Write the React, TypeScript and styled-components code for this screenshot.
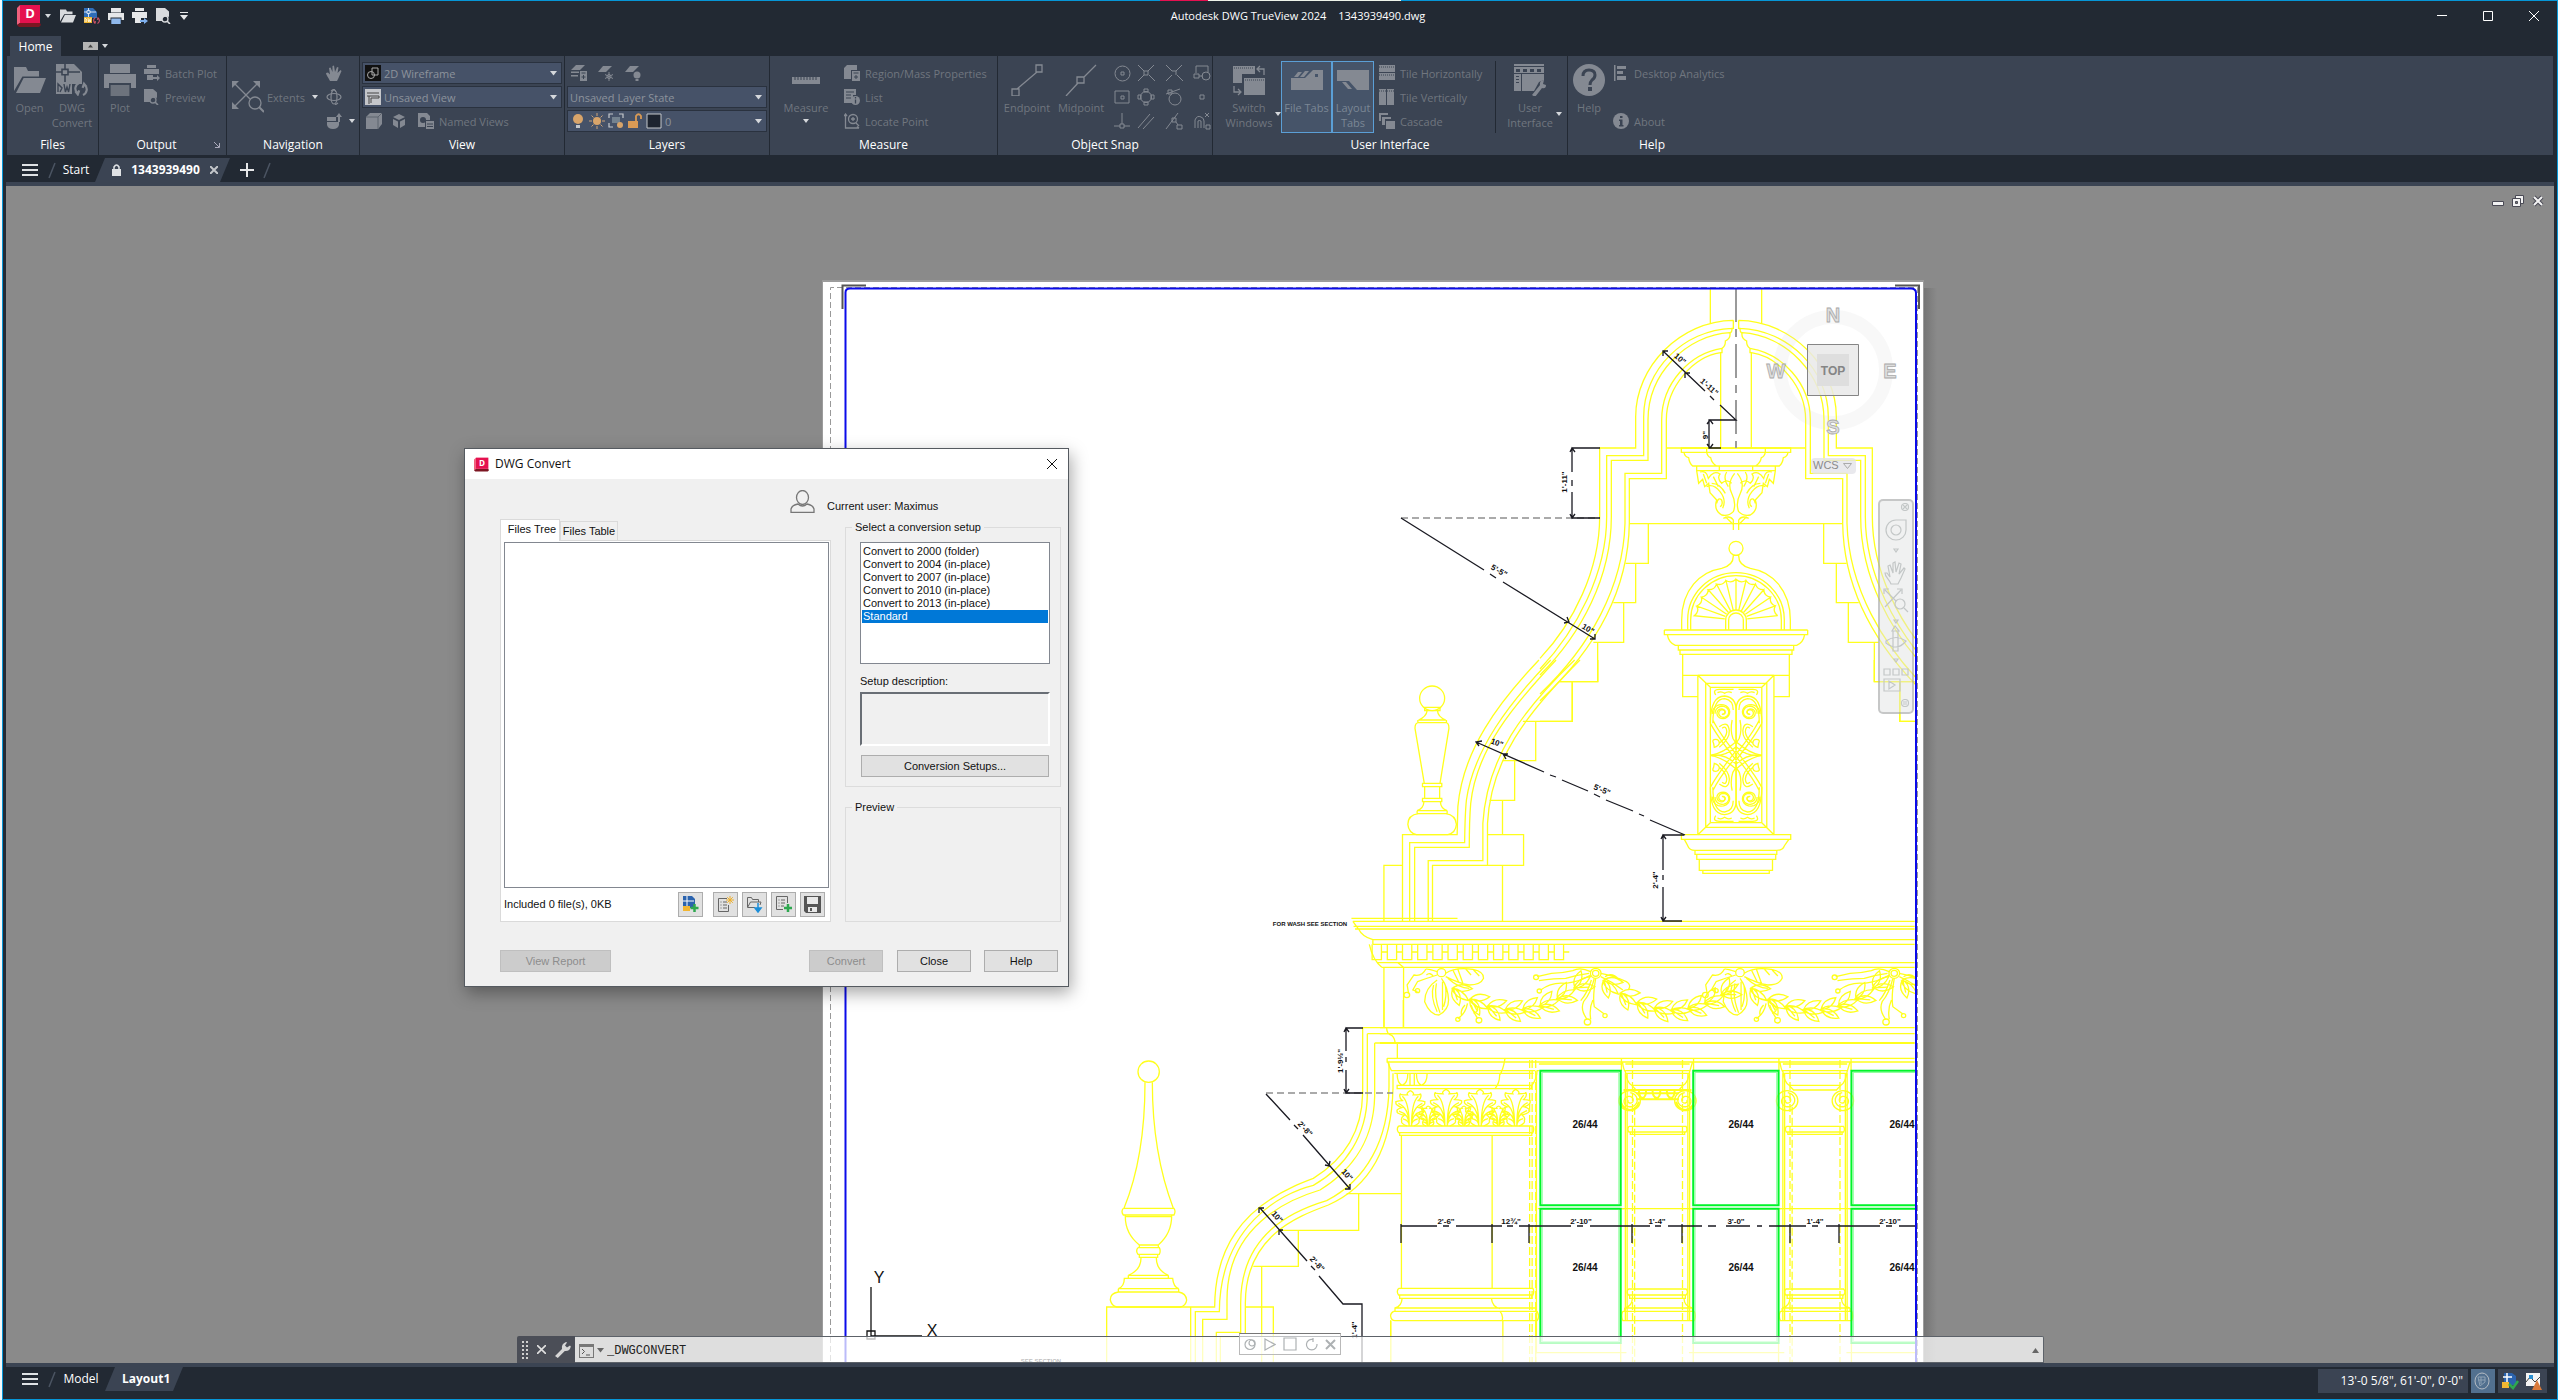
import React from 'react';
import styled, { createGlobalStyle, css } from 'styled-components';

const UI = `'Open Sans', 'Noto Sans', sans-serif`;
const DLG = `'Liberation Sans', Arial, sans-serif`;
const C = {
  dark: '#222933',
  panel: '#3b4453',
  blue: '#0696d7',
  dim: '#70767f',
  icon: '#848992',
  grey: '#8a8a8a',
  yellow: '#ffff1c',
};

const Global = createGlobalStyle`
  *, *::before, *::after { box-sizing: border-box; }
  body { margin: 0; background: #f4f9fc; font-family: ${UI}; font-size: 12px; overflow: hidden; }
  button, select, input, textarea { font: inherit; color: inherit; margin: 0; padding: 0; border: 0; background: none; border-radius: 0; }
  svg { display: block; flex: none; }
`;

const Shell = styled.div`
  height: 100vh;
  margin: 0 2px;
  display: flex;
  flex-direction: column;
  background: ${C.dark};
  border: 1px solid ${C.blue};
  border-top: 0;
  color: #fff;
`;
const Accent = styled.div`
  height: 1px;
  flex: none;
  background: linear-gradient(90deg, ${C.blue} 1157px, #e51050 1157px 1205px, #eef3ea 1205px 1398px, ${C.blue} 1398px);
`;

/* ---------- title bar ---------- */
const TitleBar = styled.header`
  height: 30px;
  flex: none;
  display: grid;
  grid-template-columns: 1fr auto 1fr;
  align-items: center;
  padding: 0 18px 0 14px;
  line-height: 16px;
`;
const QuickTools = styled.div`
  display: flex;
  align-items: center;
  gap: 8px;
`;
const AppMenu = styled.button`
  display: flex;
  align-items: center;
  gap: 4px;
  margin-right: 1px;
`;
const PlainButton = styled.button`
  display: flex;
  align-items: center;
  justify-content: center;
`;
const Caption = styled.div`
  display: flex;
  gap: 12px;
  padding-left: 40px;
  font-size: 11px;
  white-space: nowrap;
`;
const WindowButtons = styled.div`
  display: flex;
  justify-content: flex-end;
  gap: 36px;
`;

/* ---------- ribbon ---------- */
const TabRow = styled.div`
  height: 25px;
  flex: none;
  display: flex;
  align-items: flex-end;
  padding-left: 7px;
`;
const RibbonTab = styled.button`
  width: 51px;
  height: 20px;
  background: ${C.panel};
`;
const RibbonToggle = styled.button`
  display: flex;
  align-items: center;
  gap: 4px;
  height: 20px;
  margin-left: 22px;
`;
const Ribbon = styled.div`
  height: 99px;
  flex: none;
  margin: 0 4px;
  background: ${C.panel};
  display: flex;
`;
const Panel = styled.section<{ $w: number; $last?: boolean }>`
  width: ${(p) => p.$w}px;
  flex: none;
  display: flex;
  flex-direction: column;
  border-right: ${(p) => (p.$last ? '0' : `1px solid ${C.dark}`)};
`;
const PanelBody = styled.div<{ $pad?: number }>`
  height: 78px;
  padding: 5px 0 0 ${(p) => p.$pad ?? 3}px;
  display: flex;
  color: ${C.dim};
  font-size: 11px;
`;
const PanelTitle = styled.div`
  display: flex;
  align-items: center;
  line-height: 21px;
  h2 { margin: 0; flex: 1; font-size: 12px; font-weight: 400; text-align: center; }
  button { margin-right: 6px; }
`;
const BigButton = styled.button<{ $w: number; $on?: boolean }>`
  width: ${(p) => p.$w}px;
  height: 72px;
  flex: none;
  display: flex;
  flex-direction: column;
  align-items: center;
  gap: 4px;
  padding-top: 3px;
  line-height: 15px;
  white-space: nowrap;
  ${(p) => p.$on && css`background: #465469; outline: 1px solid #5b9fd6; outline-offset: -1px; color: #7b8795;`}
`;
const SplitButton = styled.div`
  display: flex;
  align-items: center;
  padding-left: 4px;
  height: 72px;
`;
const CaretCell = styled.span`
  padding-top: 34px;
`;
const ExtentsButton = styled.button`
  height: 72px;
  width: 80px;
  display: flex;
  align-items: center;
  gap: 3px;
`;
const SplitCaret = styled.span`
  display: flex;
  align-items: center;
  height: 72px;
`;
const Column = styled.div<{ $ml?: number }>`
  display: flex;
  flex-direction: column;
  margin-left: ${(p) => p.$ml ?? 4}px;
`;
const RowButton = styled.button`
  height: 24px;
  display: flex;
  align-items: center;
  gap: 5px;
  padding: 0 2px;
  white-space: nowrap;
`;
const IconRow = styled.div<{ $gap: number }>`
  height: 24px;
  display: flex;
  align-items: center;
  gap: ${(p) => p.$gap}px;
  padding-left: 4px;
`;
const Combo = styled.label`
  width: 200px;
  height: 22px;
  margin: 1px 0;
  display: flex;
  align-items: center;
  gap: 3px;
  padding: 0 4px 0 2px;
  background: #465268;
  border: 1px solid #2a323f;
  color: #8d939c;
  select { flex: 1; appearance: none; outline: 0; min-width: 0; }
`;
const SnapGrid = styled.div`
  display: grid;
  grid-template-columns: 24px 24px 32px 24px;
  grid-auto-rows: 24px;
  place-items: center;
`;
const Divider = styled.div`
  width: 1px;
  height: 72px;
  margin: 0 4px 0 8px;
  background: ${C.dark};
`;
const TileColumn = styled(Column)`
  width: 110px;
`;

/* ---------- tab strips ---------- */
const Strip = styled.nav<{ $h: number; $top: number }>`
  height: ${(p) => p.$h}px;
  flex: none;
  display: flex;
  align-items: flex-start;
  padding: ${(p) => p.$top}px 10px 0 19px;
  line-height: 24px;
`;
const StripButton = styled.button<{ $w: number; $ml: number }>`
  width: ${(p) => p.$w}px;
  height: 24px;
  margin-left: ${(p) => p.$ml}px;
  display: flex;
  align-items: center;
  justify-content: center;
  white-space: nowrap;
`;
const ActiveTab = styled.div<{ $w: number }>`
  width: ${(p) => p.$w}px;
  height: 24px;
  margin-left: 7px;
  padding: 0 12px 0 17px;
  display: flex;
  align-items: center;
  justify-content: space-between;
  font-weight: 700;
  background: ${C.panel};
  clip-path: polygon(10px 0, 100% 0, calc(100% - 10px) 100%, 0 100%);
`;
const Band = styled.div`
  height: 4px;
  flex: none;
  margin: 0 3px;
  background: ${C.panel};
`;
const StatusBox = styled.div<{ $w: number; $on?: boolean }>`
  width: ${(p) => p.$w}px;
  height: 24px;
  margin: 2px 0 0 3px;
  padding: 0 5px;
  display: flex;
  align-items: center;
  justify-content: flex-end;
  gap: 6px;
  background: ${(p) => (p.$on ? '#52708f' : C.panel)};
  white-space: nowrap;
`;
const Spacer = styled.div`
  flex: 1;
`;

/* ---------- canvas ---------- */
const Canvas = styled.main`
  flex: 1;
  min-height: 0;
  position: relative;
  overflow: hidden;
  margin: 0 3px;
  background: ${C.grey};
`;
const Sheet = styled.svg`
  position: absolute;
  left: 0;
  top: 0;
  path, circle, ellipse, rect, line { vector-effect: non-scaling-stroke; }
`;
const DocButtons = styled.div`
  position: absolute;
  right: 10px;
  top: 9px;
  display: flex;
  gap: 8px;
`;
const NavBar = styled.div`
  position: absolute;
  left: 1872px;
  top: 313px;
  width: 36px;
  height: 215px;
  display: flex;
  flex-direction: column;
  align-items: center;
  border: 2px solid rgba(120, 120, 120, 0.35);
  border-radius: 5px;
  background: rgba(225, 228, 228, 0.5);
`;
const NavItem = styled.button<{ $h: number }>`
  height: ${(p) => p.$h}px;
  width: 28px;
  flex: none;
  display: flex;
  align-items: center;
  justify-content: center;
`;
const CommandBar = styled.div`
  position: absolute;
  left: 511px;
  top: 1150px;
  width: 1527px;
  height: 27px;
  display: flex;
  color: #222;
`;
const CommandGrip = styled.div`
  width: 58px;
  display: flex;
  align-items: center;
  justify-content: space-between;
  padding: 0 4px 0 5px;
  background: #4b4e57;
  border-radius: 2px 0 0 0;
`;
const CommandField = styled.div`
  flex: 1;
  display: flex;
  align-items: center;
  gap: 3px;
  padding: 2px 4px 0 4px;
  background: rgba(255, 255, 255, 0.72);
  border: 1px solid #5d6269;
  border-left: 0;
  border-radius: 0 2px 0 0;
  input { flex: 1; font: 12px/16px 'Liberation Mono', monospace; outline: 0; }
`;
const MotionBar = styled.div`
  position: absolute;
  left: 1233px;
  top: 1147px;
  width: 102px;
  height: 22px;
  display: flex;
  align-items: center;
  justify-content: space-around;
  background: rgba(255, 255, 255, 0.6);
  border: 1px solid #b9b9b9;
  border-top-color: #777;
`;

/* ---------- dialog ---------- */
const Dialog = styled.div`
  position: absolute;
  left: 458px;
  top: 262px;
  width: 605px;
  height: 539px;
  display: flex;
  flex-direction: column;
  background: #f0f0f0;
  border: 1px solid #555a60;
  box-shadow: 2px 6px 16px rgba(0, 0, 0, 0.35);
  color: #111;
  font: 11px/13px ${DLG};
`;
const DialogTitle = styled.div`
  height: 30px;
  flex: none;
  display: flex;
  align-items: center;
  gap: 6px;
  padding: 0 11px 0 9px;
  background: #fff;
  font: 12px/16px ${UI};
  span { flex: 1; }
`;
const UserLine = styled.div`
  height: 40px;
  display: flex;
  align-items: flex-end;
  gap: 12px;
  padding: 0 0 6px 325px;
  span { line-height: 14px; }
`;
const DialogCols = styled.div`
  display: flex;
  justify-content: space-between;
  padding: 0 7px 0 35px;
`;
const FilesPane = styled.div`
  width: 331px;
`;
const TabHeads = styled.div`
  display: flex;
  align-items: flex-end;
  height: 21px;
`;
const TabHead = styled.button<{ $on?: boolean }>`
  width: ${(p) => (p.$on ? 60 : 58)}px;
  height: ${(p) => (p.$on ? 22 : 19)}px;
  margin-bottom: ${(p) => (p.$on ? -1 : 0)}px;
  padding-left: ${(p) => (p.$on ? 4 : 0)}px;
  padding-bottom: ${(p) => (p.$on ? 3 : 0)}px;
  position: relative;
  white-space: nowrap;
  background: ${(p) => (p.$on ? '#fff' : '#f0f0f0')};
  border: 1px solid #dadada;
  border-bottom: 0;
`;
const TabPage = styled.div`
  height: 382px;
  padding: 1px 1px 0 3px;
  display: flex;
  flex-direction: column;
  background: #fff;
  border: 1px solid #dadada;
`;
const Tree = styled.div`
  height: 346px;
  border: 1px solid #828790;
`;
const FilesFoot = styled.div`
  flex: 1;
  display: flex;
  align-items: center;
  gap: 4px;
  padding-right: 4px;
  span { flex: 1; }
`;
const ToolButton = styled.button<{ $first?: boolean }>`
  width: 25px;
  height: 25px;
  margin-right: ${(p) => (p.$first ? 6 : 0)}px;
  display: flex;
  align-items: center;
  justify-content: center;
  background: #e1e1e1;
  border: 1px solid #adadad;
`;
const SetupPane = styled.div`
  width: 216px;
  display: flex;
  flex-direction: column;
`;
const Group = styled.fieldset<{ $h: number; $mt: number }>`
  height: ${(p) => p.$h}px;
  margin: ${(p) => p.$mt}px 0 0;
  padding: 8px 11px 0 14px;
  min-width: 0;
  border: 1px solid #dcdcdc;
  display: flex;
  flex-direction: column;
  legend { padding: 0 3px; margin-left: -8px; }
`;
const SetupList = styled.select`
  height: 122px;
  width: 190px;
  overflow: hidden;
  background: #fff;
  border: 1px solid #828790;
  padding: 2px 1px 1px;
  outline: 0;
  option { height: 13px; min-height: 13px; line-height: 13px; padding: 0 1px; font: 11px/13px ${DLG}; color: #111; }
  option:checked { background: #0078d7 linear-gradient(#0078d7, #0078d7); color: #fff; -webkit-text-fill-color: #fff; }
`;
const FieldLabel = styled.label`
  margin: 11px 0 4px;
`;
const Description = styled.textarea`
  height: 54px;
  width: 190px;
  resize: none;
  background: #f0f0f0;
  border: 2px solid;
  border-color: #696e75 #fff #fff #696e75;
`;
const PushButton = styled.button<{ $w: number; $ml?: number; $mt?: number }>`
  width: ${(p) => p.$w}px;
  height: 22px;
  flex: none;
  margin: ${(p) => p.$mt ?? 0}px 0 0 ${(p) => p.$ml ?? 0}px;
  background: #e1e1e1;
  border: 1px solid #adadad;
  &:disabled { background: #cccccc; border-color: #bfbfbf; color: #8d8d8d; }
`;
const DialogFoot = styled.div`
  flex: 1;
  display: flex;
  align-items: flex-end;
  padding: 0 10px 14px 35px;
`;

/* ---------- icons ---------- */
const Ic = ({ s = 16, w, c = C.icon, children }: { s?: number; w?: number; c?: string; children: React.ReactNode }) => (
  <svg width={w ?? s} height={s} viewBox={`0 0 ${w ?? s} ${s}`} fill={c} stroke="none">{children}</svg>
);
const Caret = ({ c = '#d5d8dc', up = false }: { c?: string; up?: boolean }) => (
  <svg width="7" height="5" viewBox="0 0 7 5" fill={c}><path d={up ? 'M0 5h7L3.500 0z' : 'M0 0h7L3.500 4.500z'} /></svg>
);
const SmallCaret = () => <svg width="6" height="4" viewBox="0 0 6 4" fill="#d5d8dc"><path d="M0 0h6L3 4z" /></svg>;
const Slash = () => <svg width="12" height="24" viewBox="0 0 12 24"><path d="M3 20L9 5" stroke="#4b5462" strokeWidth="1.500" /></svg>;
const Menu = () => <Ic c="#dfe2e5"><path d="M0 2h16v2H0zM0 7h16v2H0zM0 12h16v2H0z" /></Ic>;
const Folder = ({ s = 16, c = C.icon }: { s?: number; c?: string }) => (
  <svg width={s} height={s} viewBox="0 0 16 16" fill={c}><path d="M0 13.500V1.500h6l1 2h5.500v2.700H4.200zM4.800 7H16l-3 7.500H1z" /></svg>
);
const Printer = ({ s = 16, c = C.icon, p = '#9a9fa7' }: { s?: number; c?: string; p?: string }) => (
  <svg width={s} height={s} viewBox="0 0 16 16"><path fill={c} d="M3 0h10v4.500H3zM0 5h16v7h-2.500V9.500h-11V12H0z" /><path fill={p} d="M3.300 10.500h9.400V16H3.300z" /></svg>
);
const DwgSheet = ({ s = 16, a = C.icon, b = C.icon, k = '#3b4453' }: { s?: number; a?: string; b?: string; k?: string }) => (
  <svg width={s} height={s} viewBox="0 0 16 16" fill="none">
    <path d="M0 0h9l4 4v6H0z" fill={a} /><path d="M4.500 0v10M0 4h12" stroke={k} strokeWidth=".8" /><path d="M3 2.700h3v2.700H3z" fill={a} stroke={k} strokeWidth=".8" />
    <path d="M0 9h8v6H0z" fill={b} /><path d="M1 14V10l2 2-1 2M4 10l.7 4 .8-2.500.8 2.500.7-4" stroke={k} strokeWidth=".7" />
    <path d="M11.500 9.500c-2 1-2.500 3.500-.8 5M13.500 15.500c2-1 2.600-3.500.8-5.200M9.600 13.500l1.300 1.700.7-2M15.300 11.500l-1.300-1.600-.7 2" stroke={a === C.icon ? C.icon : '#d4546a'} strokeWidth="1.100" />
  </svg>
);
const PageLens = ({ c = C.icon }: { c?: string }) => (
  <Ic c={c}><path d="M0 0h9l4 3.500V9a4.500 4.500 0 0 0-7 4H0z" /><circle cx="9" cy="11" r="3" fill="none" stroke={c} strokeWidth="1.300" /><path d="M11 13l3 3" stroke={c} strokeWidth="1.600" /></Ic>
);
const Snap = ({ d, extra }: { d: string; extra?: React.ReactNode }) => (
  <PlainButton aria-label="Object snap"><svg width="18" height="18" viewBox="0 0 18 18" fill="none" stroke={C.icon}><path d={d} />{extra}</svg></PlainButton>
);
const Logo = ({ w, h }: { w: number; h: number }) => (
  <svg width={w} height={h} viewBox="0 0 24 22"><path d="M0 3l3-3v18l-3 2z" fill="#f0607c" /><path d="M3 0h20v18H3z" fill="#e5114f" /><path d="M3 18h20l1 2-2 2H2l-2-2z" fill="#7c1622" /><text x="13" y="13" textAnchor="middle" fontFamily="Open Sans, sans-serif" fontWeight="700" fontSize="13" fill="#fff">D</text></svg>
);

/* ---------- drawing helpers ---------- */
const f1 = (n: number) => n.toFixed(1);
const leaf = (x: number, y: number, a: number, l: number, w: number) => {
  const tx = x + Math.cos(a) * l, ty = y + Math.sin(a) * l;
  const mx = x + Math.cos(a) * l * 0.45, my = y + Math.sin(a) * l * 0.45;
  const nx = -Math.sin(a) * w, ny = Math.cos(a) * w;
  return `M${f1(x)} ${f1(y)}Q${f1(mx + nx)} ${f1(my + ny)} ${f1(tx)} ${f1(ty)}Q${f1(mx - nx)} ${f1(my - ny)} ${f1(x)} ${f1(y)}`;
};
const swag = (x0: number, y0: number, x1: number, y1: number, sag: number) => {
  let d = '';
  const n = 8;
  for (let i = 0; i < n; i++) {
    const t = (i + 0.2) / n;
    const cx = (x0 + x1) / 2, cy = sag;
    const x = (1 - t) ** 2 * x0 + 2 * t * (1 - t) * cx + t * t * x1;
    const y = (1 - t) ** 2 * y0 + 2 * t * (1 - t) * cy + t * t * y1;
    const dx = 2 * (1 - t) * (cx - x0) + 2 * t * (x1 - cx), dy = 2 * (1 - t) * (cy - y0) + 2 * t * (y1 - cy);
    const a = Math.atan2(dy, dx);
    d += leaf(x, y, a + 0.6, 56, 22) + leaf(x, y, a - 0.6, 54, 20) + leaf(x - 4, y + 2, a, 60, 18);
    d += `M${f1(x)} ${f1(y)}l${f1(Math.cos(a + 0.6) * 40)} ${f1(Math.sin(a + 0.6) * 40)}`;
  }
  return d;
};
/* lobed leaf: an outline of rounded lobes with ribs curling out from the stem */
const acanthus = (cx: number, by: number, w: number, h: number) => {
  let d = '';
  [-1, 1].forEach((s) => {
    const pts: [number, number][] = [[0.12, 0], [0.3, 0.15], [0.22, 0.3], [0.46, 0.42], [0.3, 0.52], [0.5, 0.68], [0.28, 0.72], [0.36, 0.9], [0.1, 0.88], [0, 1]];
    d += `M${f1(cx + s * w * pts[0][0])} ${by}`;
    for (let i = 1; i < pts.length; i++) {
      const [px, py] = pts[i], [qx, qy] = pts[i - 1];
      d += `Q${f1(cx + s * w * (Math.max(px, qx) + 0.05))} ${f1(by - h * ((py + qy) / 2))} ${f1(cx + s * w * px)} ${f1(by - h * py)}`;
    }
    [[0.26, 0.2], [0.4, 0.42], [0.42, 0.64], [0.28, 0.84]].forEach(([px, py]) => {
      d += `M${f1(cx + s * w * 0.04)} ${by}Q${f1(cx + s * w * 0.04)} ${f1(by - h * py * 0.8)} ${f1(cx + s * w * px)} ${f1(by - h * py)}`;
    });
  });
  return d;
};
const spiral = (cx: number, cy: number, r: number, dir: number, start: number) => {
  let d = '';
  for (let i = 0; i <= 36; i++) {
    const t = i / 36, a = start + dir * t * Math.PI * 3.6, rr = r * (1 - t * 0.85);
    d += `${i ? 'L' : 'M'}${f1(cx + Math.cos(a) * rr)} ${f1(cy + Math.sin(a) * rr)}`;
  }
  return d;
};
const fan = () => {
  let d = '';
  const N = 12;
  for (let i = 0; i <= N; i++) {
    const a = Math.PI + ((i + 0.5) * Math.PI) / (N + 1);
    d += `M${588 + Math.cos(a) * 34} ${1050 + Math.sin(a) * 30}L${588 + Math.cos(a) * 126} ${1052 + Math.sin(a) * 124}`;
    if (i < N) {
      const b = a + Math.PI / (N + 1), m = (a + b) / 2;
      d += `Q${588 + Math.cos(m) * 112} ${1052 + Math.sin(m) * 112} ${588 + Math.cos(b) * 126} ${1052 + Math.sin(b) * 124}`;
    }
  }
  return d;
};
const Dim = ({ x, y, r = 0, s = 8, b = true, children }: { x: number; y: number; r?: number; s?: number; b?: boolean; children: string }) => (
  <text transform={`translate(${x} ${y}) rotate(${r})`} textAnchor="middle" dominantBaseline="central" fontSize={s} fontWeight={b ? 700 : 400} fill="#111" fontFamily="Liberation Sans, sans-serif">{children}</text>
);

const GABLE_HALF = 'M580 151C420 153 287 290 287 440V534H179V740C179 900 100 1060 0 1165M576 175C430 180 311 300 311 440V557H200V740C200 910 110 1080 0 1197M570 188C440 195 324 310 324 450V571H214V740C214 920 125 1090 0 1215M546 235C450 250 365 340 365 450V610H255V760C250 950 150 1130 0 1272M542 248C460 260 379 350 379 450V626H268V760C265 960 165 1140 0 1292M580 151V175H576Q577 186 570 190Q572 205 556 213Q557 228 546 235V248H542V534M511 57V160M325 761V880H257M287 880V998H220M251 998V1117H160M173 1117V1235H58M97 1235V1354H0';
const NICHE_HALF = 'M588 534H424V547H432Q434 560 446 563Q448 580 458 588H588M470 588V602H588M432 547H588M500 534V547Q503 560 512 563Q515 580 530 588M538 588V602M425 1080V1050C425 960 480 905 545 895Q581 886 580 856H588M443 1080V1050A145 142 0 0 1 588 908M452 1080V1050A136 133 0 0 1 588 917M373 1080V1094H382Q386 1118 406 1126H588M373 1080H588M373 1094H588M415 1126V1140H588M420 1140V1153H588M428 1153V1280H474M428 1216H588M557 1080V1050A31 30 0 0 1 588 1020M566 1080V1050A22 21 0 0 1 588 1029';
const BRACKET_HALF = 'M470 602L476 640L488 628L494 650L506 640L510 668L530 690Q520 720 545 735Q565 740 580 725Q590 700 575 670Q560 640 584 610M480 606Q500 600 505 625Q520 600 540 612Q530 625 545 640Q560 625 575 640M500 650Q520 640 540 665Q560 690 548 715M515 640Q540 640 556 670M530 700Q535 680 545 690Q550 705 540 710M520 620L535 650M490 612L500 640M560 606Q548 625 565 650M550 745Q570 735 580 750V780M556 740L578 762';
const SCROLL_Q = 'M925 190Q925 108 965 108Q997 112 997 150V270M932 190Q932 116 965 116Q989 120 989 150M925 190Q945 230 997 300M932 180Q950 220 1000 286M925 286Q960 280 997 245M925 286Q965 292 997 260M950 200Q975 180 978 212Q980 235 950 262M958 205Q970 195 971 215Q970 232 950 250M934 250Q928 238 940 238Q950 238 950 250Q948 258 936 262ZM986 180Q980 210 988 235Q997 250 997 250M940 105Q930 88 950 88H990M945 98Q955 92 965 100Q975 92 985 98';
const VOLUTE = spiral(0, 0, 24, 1, -1.5);

const Drawing = () => {
  const dentils = Array.from({ length: 13 }, (_, i) => `M${-22 + i * 42.5} 853V899H${4 + i * 42.5}V853M${4 + i * 42.5} 876h16`).join('');
  return (
    <Sheet width="2548" height="1177" viewBox="6 186 2548 1177" role="img" aria-label="Layout1 drawing sheet">
      <defs>
        <clipPath id="frame"><rect x="846" y="288" width="1070" height="1080" /></clipPath>
        <linearGradient id="edge"><stop offset="0" stopColor="#747474" /><stop offset="1" stopColor={C.grey} /></linearGradient>
      </defs>
      <rect x="1923" y="288" width="14" height="1080" fill="url(#edge)" />
      <rect x="822" y="280" width="1102" height="1090" fill="#9c9c9c" />
      <rect x="823" y="282" width="1100" height="1090" fill="#fff" />
      <path d="M830.500 1370V287.500H1917.500V1370" fill="none" stroke="#999" strokeDasharray="6 3" />
      <path d="M842.500 309V285.500H866M1895 285.500H1919V309" fill="none" stroke="#555" strokeWidth="2" />

      <g clipPath="url(#frame)" fill="none" stroke={C.yellow} strokeWidth="1.300">
        {/* gable crown and niche */}
        <g transform="translate(1540 270) scale(.33333)">
          <path d={GABLE_HALF} /><path d={GABLE_HALF} transform="translate(1176 0) scale(-1 1)" />
          <path d={NICHE_HALF} /><path d={NICHE_HALF} transform="translate(1176 0) scale(-1 1)" />
          <path d={BRACKET_HALF} /><path d={BRACKET_HALF} transform="translate(1176 0) scale(-1 1)" />
          <path d="M379 534H797M268 761H908" />
          <circle cx="588" cy="835" r="21" /><path d={fan()} />
        </g>

        {/* gable shoulder, panel and cornice */}
        <g transform="translate(1380 660) scale(.35714 .33333)">
          <path d="M445 0C330 130 232 270 218 440L216 524H63V783M478 0C360 130 262 270 242 420Q238 460 237 548H83V783M493 0C370 140 270 270 254 430Q250 480 250 562H97V783M545 0C400 150 300 290 288 490V602H135V783M560 0C410 160 310 300 301 490V616H147V783" />
          <path d="M610 0V65H503M538 65V184H400M436 184V302H343M377 302V421H307M343 421V524M301 524H402V616H301M343 616V783M11 783V616H63M1384 0V65H1497M1456 65V184H1497" />
          <ellipse cx="146" cy="115" rx="35" ry="37" />
          <path d="M125 142H168V152H125ZM132 152Q130 170 108 180H184Q162 170 161 152M106 180V188H186V180M106 188Q98 190 98 205L124 370H168L193 205Q193 190 186 188M119 370H173V380H119ZM125 380V415M167 380V415M119 415H173V425H119ZM123 425Q122 445 104 452H188Q170 445 169 425M104 452V461H188V452M108 461Q78 465 78 493Q80 518 102 524H190Q212 518 214 493Q212 465 184 461" />
          <path d="M890 46V524M1103 46V524M890 46H1103M912 70V502H1083V70ZM925 82V488H1069V82ZM890 46L925 82M1103 46L1069 82M890 524L925 488M1103 524L1069 488" />
          {['', 'translate(1994 0) scale(-1 1)', 'translate(0 572) scale(1 -1)', 'translate(1994 572) scale(-1 -1)'].map((t) => (
            <g key={t} transform={t}><path d={SCROLL_Q} /><path d={spiral(958, 158, 28, 1, 3)} /><path d={spiral(960, 158, 22, 1, 3)} /></g>
          ))}
          <path d="M844 524H1150V538H844ZM852 538Q856 545 862 558Q866 571 882 571H1111Q1128 571 1132 558Q1140 545 1145 538M882 571V583H1111V571M887 583V598H1108V583M894 598V631H1099V598M904 631V640H1090V631" />
          <path d="M-80 775H217M-76 784H1497M-74 799H1497M-70 807H1497M-20 839H1497M-20 853H1497M-8 908H1497M5 922H1497M-76 784L-60 807Q-50 830 -20 839V853M-30 853Q-20 900 5 922M50 908L66 922V1103M11 922V1103M0 1103H1497M0 1121H1497M0 1150H1497" />
          <path d={dentils} />
          <path d={swag(195, 975, 585, 950, 1135) + swag(618, 950, 995, 975, 1135) + swag(1030, 975, 1421, 950, 1135) + swag(1454, 950, 1830, 975, 1135)} />
          {[0, 836].map((dx) => (
            <g key={dx} transform={`translate(${dx} 0)`}>
              <circle cx="172" cy="938" r="12" />
              <path d="M160 960Q125 985 125 1025Q140 1065 165 1065Q192 1050 192 1020Q190 980 172 955M150 975Q140 1010 160 1055M158 970Q150 1010 168 1058M175 965V1050M183 975Q188 1010 178 1040M184 940Q210 920 260 928Q292 935 290 955Q282 975 250 975Q220 970 184 950M205 932L220 965M218 928L232 970M240 927L255 945M262 930L278 948M190 955Q220 985 250 985M160 935Q130 925 128 928Q118 950 95 945L76 975L80 1000M160 945Q130 955 105 965L92 990L105 995M150 950Q140 935 130 945" />
              <path d="M245 1030Q240 1060 218 1076M255 1035Q262 1060 274 1076M262 1030Q285 1050 262 1060M238 1035Q225 1050 228 1064" />
              <circle cx="218" cy="1078" r="6" /><circle cx="277" cy="1081" r="8" /><circle cx="75" cy="1005" r="8" /><circle cx="105" cy="992" r="6" />
              <circle cx="604" cy="940" r="15" /><circle cx="604" cy="940" r="9" />
              <path d="M590 935Q560 920 540 932Q510 940 480 940L440 950M590 945Q560 965 520 970Q480 965 450 990M585 940Q550 945 520 955Q490 955 445 962M618 940Q650 945 690 965Q705 975 695 990M618 950Q650 965 680 990M630 950Q650 935 670 960M600 955Q590 1000 570 1025Q560 1050 580 1078M592 960Q580 1000 562 1022M604 955Q595 1010 600 1040L628 1062M596 1020Q585 1045 590 1078" />
              <circle cx="437" cy="952" r="7" /><circle cx="446" cy="993" r="6" /><circle cx="581" cy="1086" r="9" /><circle cx="630" cy="1067" r="6" />
            </g>
          ))}
        </g>

        {/* lower scroll and finial */}
        <g transform="translate(1080 1000) scale(.33333)">
          <circle cx="206" cy="215" r="32" />
          <path d="M195 247C195 400 175 520 132 625M217 247C217 400 240 520 280 625M130 625H282Q288 634 282 645H130Q122 634 130 625M136 645Q134 700 178 735H235Q276 700 275 645M136 650H275M178 735V743M235 735V743M174 743H238Q243 753 238 763H174Q166 753 174 743M178 763V772H233V763M183 772Q184 810 145 826H265Q228 810 229 772M145 826V835H265V826M133 835Q133 860 115 866H296Q280 860 278 835ZM115 866V876H296V866M115 876Q90 880 91 900Q95 918 110 921H300Q318 918 320 900Q318 880 296 876" />
          <path d="M848 83V280C846 400 790 480 700 535Q660 550 640 560C490 630 405 740 404 921H80V1085M862 101V285C860 405 800 500 700 556C600 580 420 680 418 935H346V1085M884 129V290C880 440 800 520 720 570C620 600 441 680 441 900V958H368V1085M927 190V260C925 420 860 540 740 602C640 632 482 700 482 910V997H409V1085M939 220V265C935 440 870 560 745 615C650 650 496 710 496 910V1000M332 921V1085M421 1085V1010H482" />
          <path d="M800 581H964M836 581V691H600M655 691V799H520M545 799V1085M496 921H580V1085M848 83H1260M862 101H1260M884 129H1260M952 129V175M920 83Q920 103 935 106Q945 115 945 129M912 0V83M970 0V83M932 961V1085" />
        </g>

        {/* pilasters and window bay */}
        <g transform="translate(1380 1040) scale(.35714 .33333)">
          <path d="M0 8H1497M20 55H1497M20 55V66H1497M22 66Q26 80 32 92H435M40 100H430M48 136H424V146H48ZM48 100Q48 130 62 136Q78 130 78 100M102 100Q102 130 116 136Q132 130 132 100M84 100V136M96 100V136M350 55Q345 90 335 105Q335 130 322 146M445 72H675M445 92H440Q438 120 425 136" />
          <path d={acanthus(85, 258, 80, 106) + acanthus(185, 258, 86, 110) + acanthus(280, 258, 86, 110) + acanthus(380, 258, 80, 110) + acanthus(135, 258, 50, 60) + acanthus(235, 258, 50, 60) + acanthus(332, 258, 50, 60)} />
          <path d="M52 258H428Q433 268 428 278H52Q45 268 52 258M55 278V286H425V278M60 286V745M314 286V745M52 745H428Q433 755 428 765H52Q45 755 52 745M55 765V775H425V765M62 775Q60 800 42 804V814H436V804H42M312 775Q314 800 336 806M38 814Q28 820 30 830Q32 842 42 842H440Q448 830 440 814H38M336 814Q346 825 342 842M30 842V968M344 842V968" />
          <path d="M419 60V968M426 60V968M436 60V968" strokeDasharray="8 3" /><path d="M438 100V938H690M865 938H1132M1306 938H1500M436 842V968M674 909V968M877 909V968M1116 909V968M1320 909V968" />
          <path d="M442 506H1497" />
          {[777, 1218].map((cx, k) => (
            <g key={cx} transform={`translate(${cx} 0)`}>
              <path d="M-101 55V92M101 55V92M-90 72H90M-92 92H92M-90 100H90M-98 66Q-95 90 -90 95Q-85 130 -72 136H72Q85 130 90 95L98 66M-72 136L-60 150H60L72 136" />
              <path d="M-90 100V842M-85 100V842M90 100V842M85 100V842M-94 506H-100M94 506H100" />
              <path d="M-70 60V968M70 60V968M-64 200V968" strokeDasharray="8 3" />
              <path d="M-80 259H80Q85 268 80 276H-80Q-86 268 -80 259M-76 276V283H76V276M-82 747H80Q88 756 80 765H-82Q-88 756 -82 747M-78 765V775H78V765M-70 775Q-72 800 -92 804H98Q75 800 74 775M-92 804V814H98V804M-97 814Q-103 828 -97 842H103Q108 828 103 814H-97" />
              <path d={VOLUTE} transform="translate(-78 182)" /><path d={VOLUTE} transform="translate(78 182) scale(-1 1)" />
              <circle cx="-78" cy="182" r="30" /><circle cx="78" cy="182" r="30" />
              {k === 0 && <path strokeWidth="2" d="M-95 150H95M-60 160H60M-60 178H60M-52 150Q-52 172 -42 174Q-32 172 -32 150M-14 150Q-14 172 -2 174Q8 172 8 150M26 150Q26 172 38 174Q48 172 48 150M-104 170Q-104 205 -78 210Q-58 208 -52 185M104 170Q104 205 78 210Q58 208 52 185" />}
            </g>
          ))}
          <g stroke="#00f52a" strokeWidth="2">
            <path d="M449 92H674V496H449ZM449 506H674V909H449ZM877 92H1116V496H877ZM877 506H1116V909H877ZM1510 92H1320V496H1510M1510 506H1320V909H1510" />
            <path d="M454 97H669V492M454 97V492M454 510V905H669V510M882 97H1111V492M882 97V492M882 510V905H1111V510M1325 97V492M1325 97H1500M1325 510V905H1500" strokeWidth="1" stroke="#7dff8f" />
          </g>
        </g>
      </g>

      {/* dimension lines */}
      <g clipPath="url(#frame)" fill="none" stroke="#1a1a22" strokeWidth="1.300">
        <path d="M1736 288V448" stroke="#9a9a9a" strokeWidth="2" strokeDasharray="34 7 8 7" />
        <path d="M1401 518H1600M1266 1093H1393" stroke="#8f8f8f" strokeDasharray="7 4" />
        <path d="M1663 351L1705 391M1710 396L1714 400M1720 405L1736 420H1709V448H1721M1707 424l3-4 3 4M1707 444l3 4 3-4M1663 356v-5h5M1685 378v-5h5" />
        <path d="M1600 448H1572V472M1572 480V486M1572 492V518H1600M1570 452l2-4 3 4M1570 514l2 4 3-4" />
        <path d="M1401 518L1484 570M1490 574L1496 578M1503 582L1595 639M1567 617l2 5-5 1M1595 634v5h-5" />
        <path d="M1476 742L1544 772M1550 775L1556 777M1562 780L1588 791M1594 794L1600 797M1606 800L1633 811M1639 814L1644 816M1650 820L1685 835M1482 741l-6 1 3 4M1508 754l-5 0 3 5" />
        <path d="M1684 835H1663V870M1663 875V880M1663 887V921H1682M1661 839l2-4 3 4M1661 917l2 4 3-4" />
        <path d="M1363 1028H1346V1051M1346 1057V1062M1346 1070V1093H1363M1344 1032l2-4 3 4M1344 1089l2 4 3-4" />
        <path d="M1266 1094L1290 1120M1294 1125L1298 1129M1303 1135L1350 1189M1330 1161l-1 5-4-1M1350 1184v5h-5" />
        <path d="M1260 1208L1307 1261M1311 1266L1315 1270M1319 1276L1343 1304H1362V1362M1259 1213v-5h5M1279 1235v-5h4" />
        <path d="M1401 1226H1437M1443 1226H1449M1456 1226H1502M1507 1226H1513M1519 1226H1571M1577 1226H1583M1590 1226H1650M1655 1226H1661M1668 1226H1702M1708 1226H1716M1726 1226H1750M1757 1226H1762M1769 1226H1806M1812 1226H1818M1826 1226H1880M1886 1226H1892M1899 1226H1916M1401 1224V1243M1492 1224V1243M1529 1224V1243M1632 1224V1243M1682 1224V1243M1790 1224V1243M1839 1224V1243" />
        <path d="M871 1287V1336H922M867 1331h8v8h-8z" stroke="#111" />
      </g>
      <g clipPath="url(#frame)">
        <Dim x={1680} y={359} r={40}>10"</Dim><Dim x={1709} y={387} r={42}>1'-11"</Dim><Dim x={1705} y={435} r={-90}>9"</Dim>
        <Dim x={1564} y={482} r={-90}>1'-11"</Dim><Dim x={1588} y={629} r={30}>10"</Dim><Dim x={1499} y={571} r={30}>5'-5"</Dim>
        <Dim x={1497} y={743} r={20}>10"</Dim><Dim x={1602} y={790} r={22}>5'-5"</Dim><Dim x={1655} y={880} r={-90}>2'-4"</Dim>
        <Dim x={1340} y={1061} r={-90}>1'-9½"</Dim><Dim x={1305} y={1129} r={48}>2'-8"</Dim><Dim x={1347} y={1175} r={48}>10"</Dim>
        <Dim x={1277} y={1217} r={48}>10"</Dim><Dim x={1317} y={1264} r={48}>2'-8"</Dim><Dim x={1354} y={1330} r={-90}>1'-4"</Dim>
        <Dim x={1446} y={1221}>2'-6"</Dim><Dim x={1511} y={1221}>12¾"</Dim><Dim x={1581} y={1221}>2'-10"</Dim><Dim x={1657} y={1221}>1'-4"</Dim>
        <Dim x={1736} y={1221}>3'-0"</Dim><Dim x={1815} y={1221}>1'-4"</Dim><Dim x={1890} y={1221}>2'-10"</Dim>
        {[1124, 1267].map((y) => [1585, 1741, 1902].map((x) => <Dim key={`${x}-${y}`} x={x} y={y} s={10}>26/44</Dim>))}
        <Dim x={1310} y={924} s={6}>FOR WASH SEE SECTION</Dim>
        <Dim x={1041} y={1361} s={6}>SEE SECTION</Dim>
        <Dim x={879} y={1277} s={16} b={false}>Y</Dim><Dim x={932} y={1330} s={16} b={false}>X</Dim>
      </g>
      <path d="M845.500 1370V292.500Q845.500 288.500 850 288.500H1911Q1916 288.500 1916 293V1370" fill="none" stroke="#0b0bea" strokeWidth="2" />

      {/* view cube */}
      <circle cx="1833" cy="370" r="53" fill="none" stroke="#d6d6d6" strokeOpacity=".16" strokeWidth="14" />
      <rect x="1807.500" y="344.500" width="51" height="51" fill="#e9e9e9" fillOpacity=".85" stroke="#858585" />
      <rect x="1817" y="354" width="32" height="32" fill="#dedede" />
      <g fontFamily="Liberation Sans, sans-serif" fontWeight="700" textAnchor="middle" dominantBaseline="central">
        <text x="1833" y="371" fontSize="12" fill="#858585">TOP</text>
        <g fontSize="20" fill="#dedede" stroke="#a9a9a9" strokeWidth=".8"><text x="1833" y="315">N</text><text x="1833" y="427">S</text><text x="1776" y="371">W</text><text x="1890" y="371">E</text></g>
      </g>
      <rect x="1811" y="458" width="45" height="16" rx="4" fill="#e4e4e8" fillOpacity=".8" />
      <text x="1813" y="469" fontFamily="Liberation Sans, sans-serif" fontSize="11" fill="#8b8b8b">WCS</text>
      <path d="M1843.500 463.500h8l-4 5z" fill="none" stroke="#aaa" />
    </Sheet>
  );
};

const setups = ['Convert to 2000 (folder)', 'Convert to 2004 (in-place)', 'Convert to 2007 (in-place)', 'Convert to 2010 (in-place)', 'Convert to 2013 (in-place)', 'Standard'];

const ConvertDialog = () => (
  <Dialog role="dialog" aria-label="DWG Convert">
    <DialogTitle>
      <Logo w={15} h={17} /><span>DWG Convert</span>
      <PlainButton aria-label="Close dialog"><svg width="10" height="10" viewBox="0 0 10 10" stroke="#111" fill="none"><path d="M0 0l10 10M10 0L0 10" /></svg></PlainButton>
    </DialogTitle>
    <UserLine>
      <svg width="25" height="23" viewBox="0 0 25 23" fill="none" stroke="#777" strokeWidth="1.300"><ellipse cx="12.500" cy="7.500" rx="6" ry="7" /><path d="M1 22.300V19q1-4 7-5 4.500 4 9 0 6 1 7 5v3.300z" /></svg>
      <span>Current user: Maximus</span>
    </UserLine>
    <DialogCols>
      <FilesPane>
        <TabHeads><TabHead $on>Files Tree</TabHead><TabHead>Files Table</TabHead></TabHeads>
        <TabPage>
          <Tree />
          <FilesFoot>
            <span>Included 0 file(s), 0KB</span>
            <ToolButton $first aria-label="Add drawings"><svg width="17" height="17" viewBox="0 0 17 17"><path fill="#2b63ae" d="M1 0h9l3 3v9H1z" /><path d="M5 0v10M1 5h11" stroke="#fff" /><path fill="#f2b632" d="M1 10h7v5H1z" /><path d="M12.500 8v8M8.500 12h8" stroke="#2ea84f" strokeWidth="2.500" /></svg></ToolButton>
            <ToolButton aria-label="New list"><svg width="17" height="17" viewBox="0 0 17 17" fill="none" stroke="#666"><path d="M10 2.500H1.500v13h10V9" /><path d="M3.500 6h1M6 6h4M3.500 9h1M6 9h4M3.500 12h1M6 12h4" /><path d="M13 0v8M9 4h8M10.200 1.200l5.600 5.600M15.800 1.200l-5.600 5.600" stroke="#efb02c" /></svg></ToolButton>
            <ToolButton aria-label="Open list"><svg width="17" height="17" viewBox="0 0 17 17" fill="none" stroke="#666"><path d="M1.500 11V1.500h4l1 2h6V6M1.500 11.500L4.500 6H15l-1 3M1.500 11.500H9" /><path d="M12 7v8M9 12l3 4 3-4z" stroke="#1c8ed8" fill="#1c8ed8" strokeWidth="1.500" /></svg></ToolButton>
            <ToolButton aria-label="Append list"><svg width="17" height="17" viewBox="0 0 17 17" fill="none" stroke="#666"><path d="M12.500 7V.500h-11v13H8" /><path d="M3.500 4h1M6 4h4M3.500 7h1M6 7h4M3.500 10h1M6 10h3" /><path d="M13 8v8M9 12h8" stroke="#2ea84f" strokeWidth="2.500" /></svg></ToolButton>
            <ToolButton aria-label="Save list"><svg width="17" height="17" viewBox="0 0 17 17"><path fill="#555" d="M0 0h17v17H2l-2-2z" /><path fill="#e8e8e8" d="M3 1h11v7H3zM4 11h9v5H4z" /><path fill="#555" d="M6 12h2v3H6z" /></svg></ToolButton>
          </FilesFoot>
        </TabPage>
      </FilesPane>
      <SetupPane>
        <Group $h={266} $mt={2}>
          <legend>Select a conversion setup</legend>
          <SetupList size={9} defaultValue="Standard" aria-label="Conversion setup">{setups.map((s) => <option key={s}>{s}</option>)}</SetupList>
          <FieldLabel htmlFor="desc">Setup description:</FieldLabel>
          <Description id="desc" readOnly />
          <PushButton $w={188} $mt={9} $ml={1}>Conversion Setups...</PushButton>
        </Group>
        <Group $h={121} $mt={14}><legend>Preview</legend></Group>
      </SetupPane>
    </DialogCols>
    <DialogFoot>
      <PushButton $w={111} disabled>View Report</PushButton>
      <Spacer />
      <PushButton $w={74} disabled>Convert</PushButton>
      <PushButton $w={74} $ml={14}>Close</PushButton>
      <PushButton $w={74} $ml={13}>Help</PushButton>
    </DialogFoot>
  </Dialog>
);

const RibbonBar = () => (
  <Ribbon>
    <Panel $w={92}>
      <PanelBody>
        <BigButton $w={39}><Folder s={32} />Open</BigButton>
        <BigButton $w={46}><DwgSheet s={32} /><span>DWG<br />Convert</span></BigButton>
      </PanelBody>
      <PanelTitle><h2>Files</h2></PanelTitle>
    </Panel>
    <Panel $w={128}>
      <PanelBody>
        <BigButton $w={36}><Printer s={32} p="#6d737d" />Plot</BigButton>
        <Column>
          <RowButton><Ic><path d="M3 0h9v3H3zM0 4h15v5H0zM3 10h6v5H3z" /><path d="M9 12h4v-2l3 3-3 3v-2H9z" /></Ic>Batch Plot</RowButton>
          <RowButton><PageLens />Preview</RowButton>
        </Column>
      </PanelBody>
      <PanelTitle><h2>Output</h2><PlainButton aria-label="Output options"><svg width="6" height="6" viewBox="0 0 6 6" stroke="#aab" fill="none"><path d="M0 0l5 5M5.500 1v4.500H1" /></svg></PlainButton></PanelTitle>
    </Panel>
    <Panel $w={133}>
      <PanelBody $pad={5}>
        <ExtentsButton>
          <svg width="32" height="32" viewBox="0 0 32 32" fill="none" stroke={C.icon} strokeWidth="1.300"><path d="M1 1l17 17M27 1L1 27" /><path d="M0 0h7L0 7zM28 0h-7l7 7zM0 28v-7l7 7z" fill={C.icon} stroke="none" /><circle cx="23" cy="22" r="6" /><path d="M27 26l5 5" strokeWidth="2" /></svg>
          Extents
        </ExtentsButton>
        <SplitCaret><SmallCaret /></SplitCaret>
        <Column $ml={6}>
          <RowButton aria-label="Pan"><Ic><path d="M4 16C2 12 0 10 0 8l2-.5 2 2L3 3l1.500-.5L6.500 7V1L8 .5 9 7l2-5 1.500.5L11.500 8l3-3 1 1-3 7-1.500 3z" /></Ic></RowButton>
          <RowButton aria-label="Orbit"><Ic><g fill="none" stroke={C.icon} strokeWidth="1.200"><ellipse cx="8" cy="8" rx="7" ry="3.500" /><ellipse cx="8" cy="8" rx="3" ry="7" /><path d="M5 2l3-2 2 3M12 14l-3 2" /></g></Ic></RowButton>
          <RowButton aria-label="Motion"><Ic w={18}><path d="M1 4h9v4H1zM1 9h12v3q-1 4-6 4t-6-4zM13 0l3 4h-2v5h-2V4h-2z" /></Ic><SmallCaret /></RowButton>
        </Column>
      </PanelBody>
      <PanelTitle><h2>Navigation</h2></PanelTitle>
    </Panel>
    <Panel $w={205}>
      <PanelBody $pad={2}>
        <Column $ml={0}>
          <Combo><Ic><path d="M0 0h16v16H0z" fill="#111" /><path d="M7 3h6v7H7z" fill="none" stroke="#aaa" /><circle cx="6" cy="10" r="3.500" fill="none" stroke="#aaa" /></Ic><select aria-label="Visual style"><option>2D Wireframe</option></select><Caret /></Combo>
          <Combo><Ic c="#c4c6ca"><path d="M0 0h16v16H0z" /><path d="M2 4h12M2 7h12v2H6v5M4 7v8" fill="none" stroke="#444" /></Ic><select aria-label="View"><option>Unsaved View</option></select><Caret /></Combo>
          <IconRow $gap={9}>
            <Ic><path d="M0 4l4-4h12v11l-4 5H0z" /><path d="M0 4h12v12M12 4l4-4" fill="none" stroke="#5d646f" /></Ic>
            <Ic><path d="M8 1l6 3-6 3-6-3zM2 6l5 2.500V15l-5-3zM14 6L9 8.500V15l5-3z" /></Ic>
            <RowButton><Ic><path d="M0 0h9l3 3v4H7v7H0z" /><circle cx="5" cy="7" r="3" fill={C.panel} /><path d="M8 8h8v8H8z" /><path d="M9 11h6M9 13.500h6" stroke={C.panel} /></Ic>Named Views</RowButton>
          </IconRow>
        </Column>
      </PanelBody>
      <PanelTitle><h2>View</h2></PanelTitle>
    </Panel>
    <Panel $w={205}>
      <PanelBody $pad={2}>
        <Column $ml={0}>
          <IconRow $gap={11}>
            <Ic><path d="M5 0h9L9 5H0zM0 6.500h8v1.500H0zM0 10h7v1.500H0zM9 6h7v10H9z" /><path d="M10.500 8h4M12.500 10v4M10.500 12h4" stroke={C.panel} /></Ic>
            <Ic><path d="M5 1h9L8 7H0z" /><g stroke={C.icon} fill="none"><circle cx="11" cy="11.500" r="2" /><path d="M11 7v9M7 9.500l8 4M7 13.500l8-4" /></g></Ic>
            <Ic><path d="M5 1h9L8 7H0z" /><circle cx="12" cy="10" r="3.500" /><path d="M10.500 14h3v2h-3z" /></Ic>
          </IconRow>
          <Combo><select aria-label="Layer state"><option>Unsaved Layer State</option></select><Caret /></Combo>
          <Combo>
            <Ic><circle cx="8" cy="6" r="5" fill="#d8a46a" /><path d="M6 12h4v3H6z" fill="#c5c8cc" /></Ic>
            <Ic><circle cx="8" cy="8" r="4" fill="#d8a46a" /><path d="M8 0v3M8 13v3M0 8h3M13 8h3M2.500 2.500l2 2M11.500 11.500l2 2M13.500 2.500l-2 2M4.500 11.500l-2 2" stroke="#c9a27a" /></Ic>
            <Ic><path d="M1 5V1h4M11 1h4v4M1 10v4h4" fill="none" stroke="#c5c8cc" strokeWidth="1.200" /><path d="M4 4h8v6H4z" fill="#74828f" /><circle cx="12" cy="12" r="3" fill="#d8a46a" /></Ic>
            <Ic><path d="M1 8h10v7H1z" fill="#d99a55" /><path d="M9 8V3q2.500-3.500 5 0v3" fill="none" stroke="#d99a55" strokeWidth="1.800" /></Ic>
            <Ic><path d="M1 1h14v14H1z" fill="#1d2430" stroke="#c5c8cc" /></Ic>
            <select aria-label="Layer"><option>0</option></select><Caret />
          </Combo>
        </Column>
      </PanelBody>
      <PanelTitle><h2>Layers</h2></PanelTitle>
    </Panel>
    <Panel $w={228}>
      <PanelBody $pad={6}>
        <BigButton $w={60}><Ic s={32}><path d="M2 13h28v7H2z" /><path d="M5 13v3M8 13v3M11 13v3M14 13v3M17 13v3M20 13v3M23 13v3M26 13v3" stroke={C.panel} /></Ic>Measure<SmallCaret /></BigButton>
        <Column $ml={6}>
          <RowButton><Ic><path d="M0 3l3-3h10v5H7v9H0z" /><path d="M8 6h8v10H8z" /><path d="M9.500 8h5M12 10v4M10 12h4" stroke={C.panel} /></Ic>Region/Mass Properties</RowButton>
          <RowButton><Ic><path d="M0 0h12v6H9v8H0z" /><path d="M2 3h8M2 6h5M2 9h5" stroke={C.panel} /><circle cx="11.500" cy="11.500" r="4.500" /><path d="M11.500 10.500v4M11.500 8v1.500" stroke={C.panel} strokeWidth="1.300" /></Ic>List</RowButton>
          <RowButton><Ic><g fill="none" stroke={C.icon} strokeWidth="1.300"><circle cx="9" cy="6" r="4.500" /><path d="M12 10l3 3M1.500 1v14H15M0 3l1.500-2L3 3M13 13.500l2 1.500" /><path d="M7 6h4M9 4v4" /></g></Ic>Locate Point</RowButton>
        </Column>
      </PanelBody>
      <PanelTitle><h2>Measure</h2></PanelTitle>
    </Panel>
    <Panel $w={215}>
      <PanelBody $pad={4}>
        <BigButton $w={50}><svg width="32" height="32" viewBox="0 0 32 32" fill="none" stroke={C.icon} strokeWidth="1.300"><path d="M1 25h7v7H1zM25 1h6v7h-6zM6 25L26 8" /></svg>Endpoint</BigButton>
        <BigButton $w={58}><svg width="32" height="32" viewBox="0 0 32 32" fill="none" stroke={C.icon} strokeWidth="1.300"><path d="M1 32l12-13M31 1L19 13M12 13h7v6h-7z" /></svg>Midpoint</BigButton>
        <SnapGrid>
          <Snap d="M8 8h3v3H8z" extra={<circle cx="9.500" cy="9.500" r="7.500" />} />
          <Snap d="M1 1l6 6M12 11l6 6M17 1l-6 6M7 11l-6 6M7 7h4v4H7z" />
          <Snap d="M1 1l6 6M12 11l6 6M17 1l-6 6M7 11l-6 6M7 7h4v4" />
          <Snap d="M3 2h12v6M3 2v7M1 10h5v4H1zM6 12h4" extra={<circle cx="13" cy="12" r="4" />} />
          <Snap d="M2 3h14v12H2zM8 8h3v3H8z" />
          <Snap d="M7 1h4v3H7zM7 14h4v3H7zM1 7h3v4H1zM14 7h3v4h-3z" extra={<circle cx="9" cy="9" r="5.500" />} />
          <Snap d="M1 6L15 1M3 2h4v4H3z" extra={<circle cx="10" cy="11" r="6" />} />
          <Snap d="M7 7h4v4H7z" />
          <Snap d="M9 1v11M1 14h6M11 14h6M7 12h4v4H7z" />
          <Snap d="M1 16L13 2M6 17L17 5" />
          <Snap d="M1 17L13 1M7 6h4v4H7zM11 10l2 3M12 13h5v4h-5z" />
          <Snap d="M2 16V8q2-5 6-3 3 1 3 4v7M5 16V9q1-1 3 0v7M12 1l4 4M16 1l-4 4M13 13h4v4h-4z" />
        </SnapGrid>
      </PanelBody>
      <PanelTitle><h2>Object Snap</h2></PanelTitle>
    </Panel>
    <Panel $w={355}>
      <PanelBody $pad={6}>
        <SplitButton>
          <BigButton $w={52}><Ic s={32}><path d="M0 2h22v8h-13v9H0z" /><path d="M11 14h21v17H11z" /><path d="M1 4h20M12 16h19" stroke={C.panel} strokeDasharray="1 1" /><path d="M24 5h7v6M27 2l-3 3 3 3M1 22v6h7M5 25l3 3-3 3" fill="none" stroke={C.icon} strokeWidth="1.300" /></Ic><span>Switch<br />Windows</span></BigButton>
          <CaretCell><SmallCaret /></CaretCell>
        </SplitButton>
        <BigButton $w={51} $on aria-pressed><Ic s={32}><path d="M0 14h14l8-8h10v20H0zM3 13l4-5h4l-4 5zM9 13l5-6h4l-5 6z" /><path d="M24 10h3v3h-3z" fill="#465469" /></Ic>File Tabs</BigButton>
        <BigButton $w={42} $on aria-pressed><Ic s={32}><path d="M0 6h32v20H20l-8-9H0zM5 18h4l6 7h-4z" /></Ic><span>Layout<br />Tabs</span></BigButton>
        <TileColumn $ml={3}>
          <RowButton><Ic><path d="M0 0h16v7H0zM0 8h16v7H0z" /><path d="M0 2h16M0 10h16" stroke={C.panel} strokeDasharray="1 1" /></Ic>Tile Horizontally</RowButton>
          <RowButton><Ic><path d="M0 0h7v16H0zM8 0h7v16H8z" /><path d="M0 2h16" stroke={C.panel} strokeDasharray="1 1" /></Ic>Tile Vertically</RowButton>
          <RowButton><Ic><path d="M0 0h9v2H2v6H0zM3 4h9v2H6v6H3zM7 8h9v8H7z" /></Ic>Cascade</RowButton>
        </TileColumn>
        <Divider />
        <SplitButton>
          <BigButton $w={52}><Ic s={32}><path d="M0 0h30v2H0zM0 3h30v6H0zM0 10h7v17H0zM8 10h22v6l-5 2-5 9H8z" /><path d="M2 5h4v3H2zM9 5h4v3H9zM16 5h4v3h-4zM23 5h4v3h-4zM2 12h3v1H2zM2 15h3v1H2zM2 18h3v1H2z" fill={C.panel} /><path d="M18 31l8-10q-1-4 4-5l-1 4 3 1q0 4-4 3l-7 9z" /></Ic><span>User<br />Interface</span></BigButton>
          <CaretCell><SmallCaret /></CaretCell>
        </SplitButton>
      </PanelBody>
      <PanelTitle><h2>User Interface</h2></PanelTitle>
    </Panel>
    <Panel $w={168} $last>
      <PanelBody>
        <BigButton $w={36}><Ic s={32}><circle cx="16" cy="16" r="16" /><path d="M10 12q0-6 6-6t6 5q0 3-3 5-2 2-2 5" fill="none" stroke={C.panel} strokeWidth="3" /><path d="M15 23h4v4h-4z" fill={C.panel} /></Ic>Help</BigButton>
        <Column>
          <RowButton><Ic><path d="M1 0h1.500v16H1zM4 1h9v3H4zM4 6h6v3H4zM4 11h9v4H4z" /></Ic>Desktop Analytics</RowButton>
          <IconRow $gap={0} />
          <RowButton><Ic><circle cx="8" cy="8" r="8" /><path d="M7 3h2.500v2H7zM6 6.500h3.500V12h1v1.500H6V12h1V8H6z" fill={C.panel} /></Ic>About</RowButton>
        </Column>
      </PanelBody>
      <PanelTitle><h2>Help</h2></PanelTitle>
    </Panel>
  </Ribbon>
);

const faint = { fill: 'none', stroke: '#c3c7c7', strokeWidth: 1.2 } as const;

export default function App() {
  return (
    <>
      <Global />
      <Shell>
        <Accent />
        <TitleBar>
          <QuickTools>
            <AppMenu aria-label="Application menu"><Logo w={24} h={22} /><SmallCaret /></AppMenu>
            <PlainButton aria-label="Open"><Folder s={16} c="#d9dbde" /></PlainButton>
            <PlainButton aria-label="DWG Convert"><DwgSheet a="#2f6db8" b="#f0b62f" k="#fff" /></PlainButton>
            <PlainButton aria-label="Plot"><Printer c="#e6e7e9" p="#8fb8ec" /></PlainButton>
            <PlainButton aria-label="Batch Plot"><Ic c="#e6e7e9"><path d="M3 0h9v3H3zM0 4h15v6H0zM3 10h6v5H3z" /><path d="M8 12h4v-2l4 3-4 3v-2H8z" fill="#7fb0ee" /></Ic></PlainButton>
            <PlainButton aria-label="Preview"><PageLens c="#d9dbde" /></PlainButton>
            <PlainButton aria-label="Customize"><Ic s={8} c="#e6e7e9"><path d="M0 0h8v1H0zM0 3h8L4 8z" /></Ic></PlainButton>
          </QuickTools>
          <Caption><span>Autodesk DWG TrueView 2024</span><span>1343939490.dwg</span></Caption>
          <WindowButtons>
            <PlainButton aria-label="Minimize"><Ic s={10} c="#fff"><path d="M0 4h10v1H0z" /></Ic></PlainButton>
            <PlainButton aria-label="Maximize"><svg width="10" height="10" viewBox="0 0 10 10" fill="none" stroke="#fff"><path d="M.5.500h9v9h-9z" /></svg></PlainButton>
            <PlainButton aria-label="Close"><svg width="10" height="10" viewBox="0 0 10 10" stroke="#fff"><path d="M0 0l10 10M10 0L0 10" /></svg></PlainButton>
          </WindowButtons>
        </TitleBar>
        <TabRow>
          <RibbonTab>Home</RibbonTab>
          <RibbonToggle aria-label="Minimize ribbon"><Ic s={8} w={15} c="#b5b5b5"><path d="M0 0h15v8H0z" /><path d="M5 5.500h5L7.500 2.500z" fill="#444" /></Ic><SmallCaret /></RibbonToggle>
        </TabRow>
        <RibbonBar />
        <Strip $h={27} $top={3}>
          <StripButton $w={16} $ml={0} aria-label="File tab menu"><Menu /></StripButton>
          <StripButton $w={12} $ml={8} as="span"><Slash /></StripButton>
          <StripButton $w={24} $ml={6}>Start</StripButton>
          <ActiveTab $w={135}>
            <Ic s={12} w={9} c="#dfe2e5"><path d="M0 5h9v7H0z" /><path d="M2 5V3q2.500-4 5 0v2" fill="none" stroke="#dfe2e5" strokeWidth="1.500" /></Ic>
            1343939490
            <PlainButton aria-label="Close tab"><svg width="8" height="8" viewBox="0 0 8 8" stroke="#c3c6ca" strokeWidth="2"><path d="M0 0l8 8M8 0L0 8" /></svg></PlainButton>
          </ActiveTab>
          <StripButton $w={14} $ml={10} aria-label="New tab"><Ic s={14} c="#e6e7e9"><path d="M6 0h2v14H6zM0 6h14v2H0z" /></Ic></StripButton>
          <StripButton $w={12} $ml={7} as="span"><Slash /></StripButton>
        </Strip>
        <Band />
        <Canvas>
          <Drawing />
          <DocButtons>
            <PlainButton aria-label="Minimize drawing"><Ic s={12}><path d="M.5 6.500h11v4H.5z" fill="#f2f2f2" stroke="#4a4a55" /></Ic></PlainButton>
            <PlainButton aria-label="Restore drawing"><Ic s={12}><path d="M3.500.500h8v8h-8z" fill="#f2f2f2" stroke="#4a4a55" /><path d="M.5 3.500h8v8h-8z" fill="#f2f2f2" stroke="#4a4a55" /><path d="M3.500 6.500h2v2h-2z" fill="#777" stroke="#4a4a55" /></Ic></PlainButton>
            <PlainButton aria-label="Close drawing"><Ic s={12}><path d="M2 2l8 8M10 2l-8 8" stroke="#4a4a55" strokeWidth="4" /><path d="M2 2l8 8M10 2l-8 8" stroke="#f4f4f4" strokeWidth="2" /></Ic></PlainButton>
          </DocButtons>
          <NavBar>
            <NavItem $h={12} aria-label="Close navigation bar"><svg width="28" height="8" viewBox="0 0 28 8" {...faint}><circle cx="23" cy="4" r="3.500" /><path d="M21 2l4 4M25 2l-4 4" /></svg></NavItem>
            <NavItem $h={46} aria-label="Steering wheel"><svg width="24" height="36" viewBox="0 0 24 36" {...faint}><path d="M22 2v10a10 10 0 1 1-10-10z" /><circle cx="12" cy="12" r="5" /><path d="M10 31h4l-2 3z" /></svg></NavItem>
            <NavItem $h={28} aria-label="Pan"><svg width="26" height="24" viewBox="0 0 24 24" {...faint}><path d="M7 23C5 18 1 16 1 12l2 0 3 4L4 5l2-1 3 8V2l2-1 1 10 3-9 2 1-2 10 5-6 1 1-4 9-3 6z" /></svg></NavItem>
            <NavItem $h={38} aria-label="Zoom"><svg width="26" height="36" viewBox="0 0 26 36" {...faint}><path d="M2 2l11 11M18 2L2 19M1 6V1h5M14 1h5v5" /><circle cx="17" cy="16" r="5" /><path d="M21 20l4 4M11 32h4l-2 3z" /></svg></NavItem>
            <NavItem $h={40} aria-label="Orbit"><svg width="26" height="40" viewBox="0 0 26 40" {...faint}><path d="M10 6h5v20h-5zM12 1l-3 5h7zM3 16q10-7 20 0-5 6-10 6t-10-4zM11 34h4l-2 3z" /></svg></NavItem>
            <NavItem $h={30} aria-label="ShowMotion"><svg width="26" height="26" viewBox="0 0 26 26" {...faint}><path d="M1 2h6v6H1zM10 2h6v6h-6zM19 2h6v6h-6zM1 12h16v12H1zM6 14v8l6-4z" /></svg></NavItem>
            <NavItem $h={16} aria-label="Navigation bar options"><svg width="28" height="8" viewBox="0 0 28 8" {...faint}><circle cx="23" cy="4" r="3.500" /><path d="M21 3h4M21 5h4" /></svg></NavItem>
          </NavBar>
          <CommandBar>
            <CommandGrip>
              <Ic s={18} w={6} c="#d0d0d0"><path d="M0 0h2v2H0zM4 0h2v2H4zM0 4h2v2H0zM4 4h2v2H4zM0 8h2v2H0zM4 8h2v2H4zM0 12h2v2H0zM4 12h2v2H4zM0 16h2v2H0zM4 16h2v2H4z" /></Ic>
              <PlainButton aria-label="Close command line"><svg width="9" height="9" viewBox="0 0 9 9" stroke="#e0e0e0" strokeWidth="1.600"><path d="M0 0l9 9M9 0L0 9" /></svg></PlainButton>
              <PlainButton aria-label="Customize command line"><Ic c="#d6d6d6"><path d="M0 14l7-7q-1-5 4-7l1 .5-2 3 2 2 3-2 .8 1q-1 5-6 4.500l-7 7z" /></Ic></PlainButton>
            </CommandGrip>
            <CommandField>
              <Ic s={14} w={15} c="#777"><path d="M0 0h15v14H0z" /><path d="M1 3h13v10H1z" fill="#dcdcdc" /><path d="M3 5l2.500 2.500L3 10M7 11h4" fill="none" stroke="#555" /></Ic>
              <Caret c="#666" />
              <input aria-label="Command" defaultValue="_DWGCONVERT" />
              <Caret c="#666" up />
            </CommandField>
          </CommandBar>
          <MotionBar>
            <PlainButton aria-label="Pin"><svg width="13" height="13" viewBox="0 0 13 13" {...faint} stroke="#adb1b3"><circle cx="6" cy="6.500" r="5" /><circle cx="8" cy="5" r="3" /></svg></PlainButton>
            <PlainButton aria-label="Play"><svg width="12" height="13" viewBox="0 0 12 13" {...faint} stroke="#adb1b3"><path d="M1 1v11l10-5.500z" /></svg></PlainButton>
            <PlainButton aria-label="Stop"><svg width="14" height="14" viewBox="0 0 14 14" {...faint} stroke="#adb1b3"><path d="M1 1h12v12H1z" /></svg></PlainButton>
            <PlainButton aria-label="Repeat"><svg width="13" height="13" viewBox="0 0 13 13" {...faint} stroke="#adb1b3"><path d="M8 1.500A5.300 5.300 0 1 0 12 6M8 0v4" /></svg></PlainButton>
            <PlainButton aria-label="Close playback"><svg width="11" height="11" viewBox="0 0 11 11" {...faint} stroke="#adb1b3" strokeWidth={2}><path d="M1 1l9 9M10 1l-9 9" /></svg></PlainButton>
          </MotionBar>
          <ConvertDialog />
        </Canvas>
        <Band />
        <Strip $h={32} $top={0}>
          <StripButton $w={16} $ml={0} aria-label="Layout menu"><Menu /></StripButton>
          <StripButton $w={12} $ml={8} as="span"><Slash /></StripButton>
          <StripButton $w={34} $ml={6}>Model</StripButton>
          <ActiveTab $w={78}>Layout1</ActiveTab>
          <Spacer />
          <StatusBox $w={150}>13'-0 5/8", 61'-0", 0'-0"</StatusBox>
          <StatusBox $w={24} $on><svg width="16" height="18" viewBox="0 0 16 18" fill="none" stroke="#b5bcc4"><ellipse cx="8" cy="9" rx="7" ry="8" /><path d="M4 5h7v5l-5 4zM4 8h7M7 5v7" stroke="#8ea2b5" /></svg></StatusBox>
          <StatusBox $w={49}>
            <svg width="17" height="17" viewBox="0 0 17 17"><path fill="#2b63ae" d="M2 0h8l4 3v9H2z" /><path d="M5 0v9M1 4h9" stroke="#fff" strokeWidth="1.500" /><path fill="#f2b632" d="M0 9h7v6H0z" /><path d="M7 11l4 4 5-7" stroke="#2ea84f" strokeWidth="2.500" fill="none" /></svg>
            <svg width="17" height="17" viewBox="0 0 17 17"><path fill="#f4f4f4" d="M1 0h14v13H1z" /><path d="M1 9l4-5 5 5 5-5" stroke="#444" fill="none" /><path d="M4 2h4v4H4z" fill="#2c8fd0" /><path d="M12 7l5 10H7z" fill="#d9793a" /></svg>
          </StatusBox>
        </Strip>
      </Shell>
    </>
  );
}
